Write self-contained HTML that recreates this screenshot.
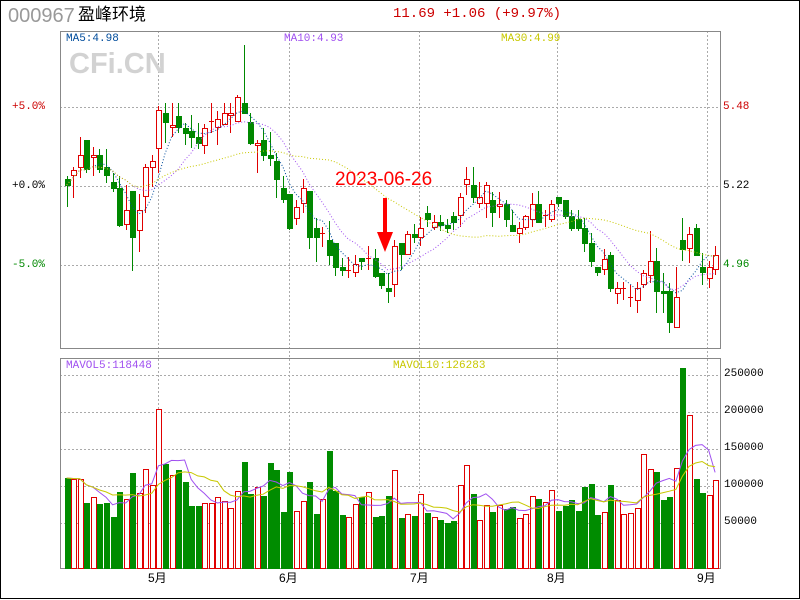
<!DOCTYPE html>
<html><head><meta charset="utf-8"><style>
html,body{margin:0;padding:0;background:#fff}
body{width:800px;height:600px;position:relative;overflow:hidden;font-family:"Liberation Sans","Noto Sans CJK SC",sans-serif}
.t{position:absolute;white-space:nowrap;line-height:1}
.s{font-size:11px;font-family:"Liberation Mono","Noto Sans CJK SC",monospace}
</style></head><body>
<svg id="g" width="800" height="600" style="position:absolute;left:0;top:0" xmlns="http://www.w3.org/2000/svg">
<rect x="0.5" y="0.5" width="799" height="598" fill="none" stroke="#000"/>
<g stroke="#aaa" stroke-dasharray="2,2" stroke-width="1">
<line x1="60" y1="107.5" x2="720" y2="107.5"/><line x1="60" y1="186.5" x2="720" y2="186.5"/><line x1="60" y1="265.5" x2="720" y2="265.5"/>
<line x1="60" y1="375.5" x2="720" y2="375.5"/><line x1="60" y1="412.5" x2="720" y2="412.5"/><line x1="60" y1="449.5" x2="720" y2="449.5"/><line x1="60" y1="486.5" x2="720" y2="486.5"/><line x1="60" y1="523.5" x2="720" y2="523.5"/>
<line x1="158.5" y1="31" x2="158.5" y2="569"/><line x1="289.5" y1="31" x2="289.5" y2="569"/><line x1="419.5" y1="31" x2="419.5" y2="569"/><line x1="557.5" y1="31" x2="557.5" y2="569"/><line x1="707.5" y1="31" x2="707.5" y2="569"/>
</g>
<rect x="60.5" y="31.5" width="660" height="317" fill="none" stroke="#888"/>
<rect x="60.5" y="358.5" width="660" height="210" fill="none" stroke="#888"/>
<g id="c"></g>
<line x1="385" y1="198" x2="385" y2="234" stroke="#f00" stroke-width="4"/>
<polygon points="377,232 393,232 385,252" fill="#f00"/>
</svg>
<div class="t" style="left:8px;top:6px;font-size:20px;color:#999">000967</div>
<div class="t" style="left:78px;top:6px;font-size:17px;color:#000">盈峰环境</div>
<div class="t" style="left:393px;top:7px;font-size:14px;color:#c00;font-family:'Liberation Mono',monospace">11.69 +1.06 (+9.97%)</div>
<div class="t s" style="left:66px;top:34px;color:#004c9c">MA5:4.98</div>
<div class="t s" style="left:284px;top:34px;color:#a050f0">MA10:4.93</div>
<div class="t s" style="left:501px;top:34px;color:#c8c800">MA30:4.99</div>
<div class="t" style="left:69px;top:50px;font-size:29px;font-weight:bold;color:#d2d2d2">CFi.CN</div>
<div class="t s" style="left:12px;top:102px;color:#c00">+5.0%</div>
<div class="t s" style="left:12px;top:181px;color:#000">+0.0%</div>
<div class="t s" style="left:12px;top:260px;color:#080">-5.0%</div>
<div class="t s" style="left:723px;top:102px;color:#c00">5.48</div>
<div class="t s" style="left:723px;top:181px;color:#000">5.22</div>
<div class="t s" style="left:723px;top:260px;color:#080">4.96</div>
<div class="t" style="left:335px;top:170px;font-size:19px;color:#f00">2023-06-26</div>
<div class="t s" style="left:66px;top:361px;color:#a050f0">MAVOL5:118448</div>
<div class="t s" style="left:393px;top:361px;color:#c8c800">MAVOL10:126283</div>
<div class="t s" style="left:724px;top:369px">250000</div>
<div class="t s" style="left:724px;top:406px">200000</div>
<div class="t s" style="left:724px;top:443px">150000</div>
<div class="t s" style="left:724px;top:480px">100000</div>
<div class="t s" style="left:724px;top:517px">50000</div>
<div class="t" style="left:148px;top:572px;font-size:12px">5月</div>
<div class="t" style="left:279px;top:572px;font-size:12px">6月</div>
<div class="t" style="left:410px;top:572px;font-size:12px">7月</div>
<div class="t" style="left:547px;top:572px;font-size:12px">8月</div>
<div class="t" style="left:697px;top:572px;font-size:12px">9月</div>
<script>
var P=[[268,284,258,350,0],[240,256,232,323,1],[196,230,142,265,1],[150,238,150,250,0],[195,202,170,258,1],[195,238,178,248,0],[232,256,178,278,0],[276,293,248,305,0],[294,404,258,412,0],[360,403,285,420,1],[303,440,303,542,0],[360,421,312,485,1],[232,319,222,368,1],[214,230,196,292,1],[60,175,48,250,1],[70,95,40,158,0],[105,112,40,140,1],[78,112,40,130,0],[114,130,98,165,0],[124,140,75,175,0],[142,158,100,176,0],[115,166,102,193,1],[92,95,40,128,1],[88,112,62,166,1],[70,102,40,104,1],[68,76,40,130,1],[22,94,14,95,1],[40,68,-135,68,0],[96,158,70,166,0],[160,166,150,250,1],[150,194,115,212,0],[196,203,125,228,0],[213,266,190,323,0],[294,328,258,340,0],[313,413,313,420,0],[352,385,330,405,1],[295,340,268,370,1],[303,440,303,476,0],[414,440,385,516,0],[430,431,412,472,1],[450,495,394,524,0],[460,530,460,557,0],[531,540,505,557,0],[540,541,500,565,1],[522,547,495,560,1],[505,512,505,540,0],[505,506,468,540,1],[505,557,478,565,0],[550,585,548,598,0],[594,602,550,640,0],
[258,373,240,412,1],[250,283,250,330,0],[222,283,212,283,1],[222,230,192,250,0],[205,230,170,258,1],[158,176,138,200,0],[186,202,165,210,1],[186,194,165,212,0],[195,203,178,220,0],[168,186,155,210,0],[112,166,100,200,1],[58,73,20,105,1],[75,110,20,128,0],[112,130,67,145,1],[76,130,67,175,1],[120,157,95,202,0],[132,138,95,175,1],[132,177,120,202,0],[195,212,150,212,0],[205,220,185,248,1],[168,202,165,210,1],[132,176,100,202,1],[132,185,92,185,0],[165,166,150,200,1],[132,176,120,185,1],[112,130,112,140,0],[120,168,120,178,0],[168,203,150,212,0],[178,203,150,212,0],[203,248,175,275,0],[250,302,220,320,0],[322,337,322,348,0],[296,328,268,345,1],[286,383,276,395,0],[385,400,365,432,1],[385,386,365,420,1],[412,413,375,440,1],[385,420,365,458,1],[340,373,330,385,1],[303,346,212,370,1],[302,392,265,458,0],[394,400,340,458,0],[394,485,368,520,0],[412,502,322,502,1],[240,266,175,302,0],[222,265,200,310,1],[205,284,192,284,0],[322,337,278,375,0],[322,355,302,385,1],[286,328,258,346,1]];
var V=[[413,0],[418,1],[418,1],[489,0],[472,1],[492,0],[489,0],[531,0],[456,0],[478,1],[399,0],[460,1],[388,1],[436,1],[208,1],[372,0],[406,1],[390,0],[426,0],[498,0],[498,0],[490,1],[490,1],[472,1],[484,1],[505,1],[454,1],[366,0],[462,0],[442,1],[468,0],[369,0],[390,0],[516,0],[396,0],[514,1],[484,1],[426,0],[522,0],[478,1],[333,0],[453,0],[525,0],[532,1],[492,1],[472,0],[457,1],[531,0],[528,0],[468,0],
[91,1],[234,0],[223,1],[228,0],[163,1],[219,0],[232,1],[240,0],[249,0],[243,0],[136,1],[76,1],[162,0],[241,1],[196,1],[216,0],[196,1],[207,0],[202,0],[235,1],[223,1],[169,1],[177,0],[187,1],[151,1],[213,0],[198,0],[180,0],
[513,0],[440,0],[432,0],[525,0],[517,1],[435,0],[480,1],[523,1],[520,1],[505,1],[343,1],[388,1],[396,0],[480,0],[471,0],[385,1],[85,0],[226,1],[417,0],[459,0],[466,1],[421,1]];
var h='',cl=[],vt=[];
function r(v){return Math.round(v);}
for(var i=0;i<100;i++){var x=66.7+6.55*i,p=P[i],o=i<50?90:160;var bt=r(o+p[0]/3),bb=r(o+p[1]/3),hi=r(o+p[2]/3),lo=r(o+p[3]/3);var c=p[4]?'#e00000':'#008800';
var xi=Math.round(x),xc=xi+0.5;h+='<line x1="'+xc+'" y1="'+hi+'" x2="'+xc+'" y2="'+lo+'" stroke="'+c+'"/>';
if(bb-bt<2)h+='<line x1="'+(xi-2)+'" y1="'+(bt+0.5)+'" x2="'+(xi+3)+'" y2="'+(bt+0.5)+'" stroke="'+c+'"/>';
else if(p[4])h+='<rect x="'+(xi-2+0.5)+'" y="'+(bt+0.5)+'" width="5" height="'+(bb-bt)+'" fill="#fff" stroke="'+c+'"/>';
else h+='<rect x="'+(xi-2)+'" y="'+bt+'" width="6" height="'+(bb-bt+1)+'" fill="'+c+'"/>';
cl.push(p[4]?bt:bb);
var vo=(i<50||i>77)?340:440,v=V[i],vy=r(vo+v[0]/3);vt.push(vy);
if(v[1])h+='<rect x="'+(xi-2+0.5)+'" y="'+(vy+0.5)+'" width="5" height="'+(568-vy)+'" fill="#fff" stroke="#e00000"/>';
else h+='<rect x="'+(xi-2)+'" y="'+vy+'" width="6" height="'+(569-vy)+'" fill="#008c00"/>';}
function ma(a,n,col,d){var s='';for(var i=0;i<100;i++){var k=Math.max(0,i-n+1),t=0;for(var j=k;j<=i;j++)t+=a[j];s+=(66.7+6.55*i).toFixed(1)+','+(t/(i-k+1)).toFixed(1)+' ';}
return '<polyline points="'+s+'" fill="none" stroke="'+col+'" stroke-width="1" '+(d?'stroke-dasharray="1,2"':'')+'/>';}
h+=ma(cl,5,'#004c9c',1)+ma(cl,10,'#a050f0',1)+ma(cl,30,'#c8c800',1);
var vm=vt.map(function(y){return 568-y;});
function mav(n,col){var s='';for(var i=0;i<100;i++){var k=Math.max(0,i-n+1),t=0;for(var j=k;j<=i;j++)t+=vm[j];s+=(66.7+6.55*i).toFixed(1)+','+(568-t/(i-k+1)).toFixed(1)+' ';}return '<polyline points="'+s+'" fill="none" stroke="'+col+'"/>';}
h+=mav(5,'#a050f0')+mav(10,'#c8c800');
document.getElementById('c').innerHTML=h;
</script>
</body></html>
